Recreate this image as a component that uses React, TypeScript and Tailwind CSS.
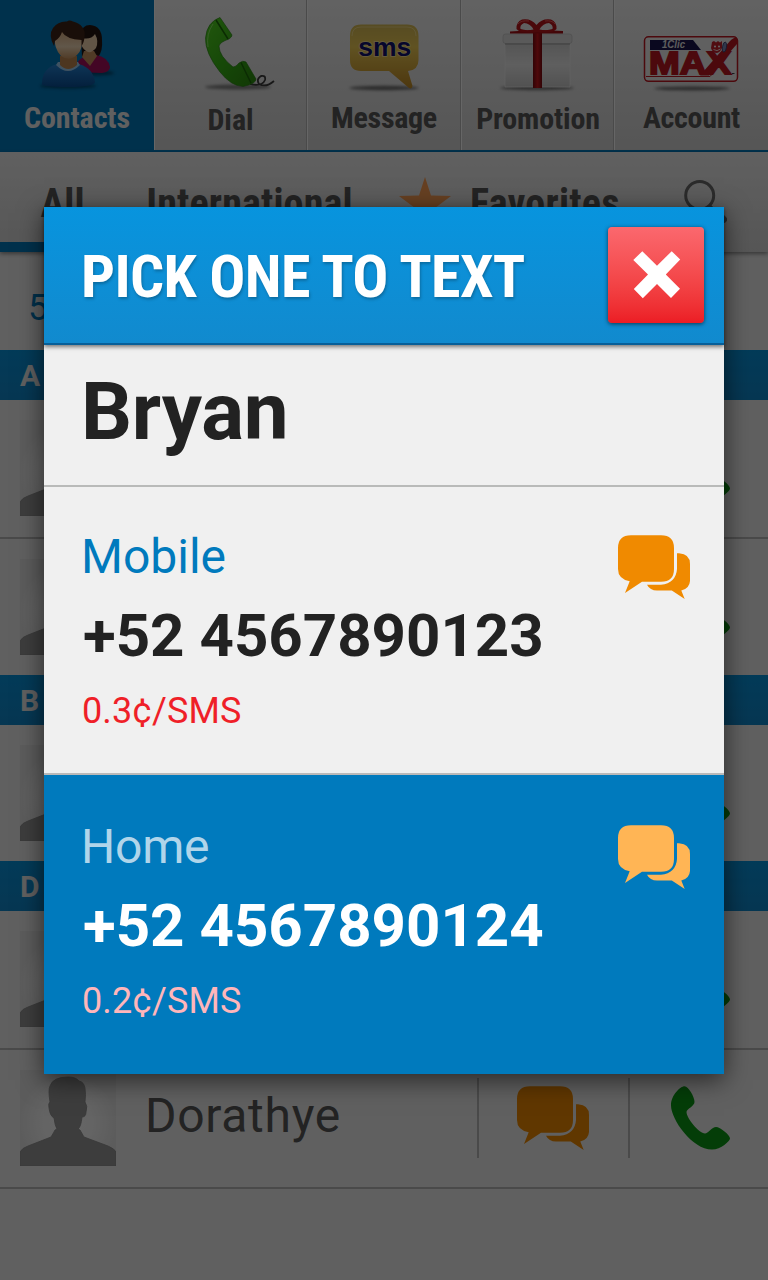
import React from "react";

function ChatIcon({ className }: { className?: string }) {
  return (
    <svg viewBox="0 0 72 64" className={"h-16 w-[72px] shrink-0 " + (className ?? "")} fill="currentColor">
      <path d="M13 .3H43Q56 .3 56 13V34Q56 46.800 43 46.800H24L7 58L11.700 46.300Q0 44 0 34V13Q0 .3 13 .3Z" />
      <path d="M59 18.300H61Q72 19 72 29V46Q71.500 53.500 63.300 55.600L66.700 64L53.800 55.600H39Q32 55.600 29 49.800H43Q58 48 59 34Z" />
    </svg>
  );
}

function PhoneIcon() {
  return (
    <svg viewBox="0 0 60 64" className="h-16 w-[60px] shrink-0 text-[#0a9a14]" fill="currentColor">
      <path d="M13.500 .3C9.500 .3 0 9 0 19.500C0 33 21 63.600 41 63.600C50 63.600 59 55 59 52.500C59 49 49 41 45 41C41 41 37 47.500 34 47.500C28 47.500 15.500 32 15.500 26C15.500 23 23.500 20 23.500 16C23.500 11 17.500 .3 13.500 .3Z" />
    </svg>
  );
}

function Avatar() {
  return (
    <svg viewBox="0 0 96 96" className="size-24 shrink-0">
      <defs>
        <radialGradient id="avatarBg" cx=".5" cy=".55" r=".5">
          <stop offset="0" stopColor="#ffffff" />
          <stop offset=".5" stopColor="#fafafa" />
          <stop offset="1" stopColor="#e7e7e7" />
        </radialGradient>
      </defs>
      <rect width="96" height="96" fill="url(#avatarBg)" />
      <path
        d="M0 96V82Q2 78 8 76L31 67Q34 62 35 60L37 59Q35 56 34 48Q30 46 29 38Q28 33 30 32Q28 20 30 16Q33 7 48 7Q56 7 59 11Q64 12 65 18Q66 24 65 32Q68 36 66 42Q66 47 62 47Q61 57 58 59L60 60Q64 67 64 67L88 76Q95 79 96 82V96Z"
        fill="#9a9a9a"
        stroke="#8c8c8c"
        strokeWidth=".8"
      />
    </svg>
  );
}

function ContactsArt() {
  return (
    <svg viewBox="0 0 154 100" className="h-[100px] w-full">
      <defs>
        <linearGradient id="face" x1="0" y1="0" x2="0" y2="1">
          <stop offset="0" stopColor="#d9a878" />
          <stop offset=".6" stopColor="#f2d9b8" />
          <stop offset="1" stopColor="#c99460" />
        </linearGradient>
        <linearGradient id="shirt" x1="0" y1="0" x2="0" y2="1">
          <stop offset="0" stopColor="#2585d6" />
          <stop offset="1" stopColor="#0a4f98" />
        </linearGradient>
        <filter id="soft" x="-20%" y="-200%" width="140%" height="500%">
          <feGaussianBlur stdDeviation="1.6" />
        </filter>
      </defs>
      <ellipse cx="98" cy="73" rx="16" ry="2.500" fill="#00283f" opacity=".6" filter="url(#soft)" />
      <ellipse cx="68" cy="86" rx="28" ry="2.500" fill="#00283f" opacity=".6" filter="url(#soft)" />
      <path d="M81 34Q82 25 90 25Q102 26 102 40Q103 51 98 57L82 57Z" fill="#241510" />
      <path d="M76 72Q75 60 84 57L96 55Q108 57 110 67Q110 72 102 73Z" fill="#a80f5c" />
      <path d="M82 57L90 66L97 56L94 51H84Z" fill="#c99460" />
      <path d="M82 38Q91 40 95 34Q99 41 96 48Q92 53 88 52Q83 50 81 44Z" fill="#f2d4b0" />
      <path d="M42 84Q42 68 57 64L79 64Q93 68 95 82Q94 87 68 87Q42 87 42 84Z" fill="url(#shirt)" />
      <path d="M56 65Q68 77 80 65L78 62H58Z" fill="#9fcdf2" />
      <path d="M60 56H77V65Q68 73 60 65Z" fill="#c08850" />
      <path d="M54 34Q68 22 82 36Q83 50 77 55Q69 62 61 56Q54 49 54 34Z" fill="url(#face)" />
      <path d="M54 46Q48 35 53 28Q58 21 67 21.500Q69 19.500 73 21.500Q86 25 84.500 37Q84 43 81.500 46V40Q66 39 62 32Q60 38 55 41Z" fill="#402417" />
    </svg>
  );
}

function DialArt() {
  return (
    <svg viewBox="155 0 151 100" className="h-[100px] w-full">
      <defs>
        <linearGradient id="handset" x1="0" y1="0" x2="1" y2="1">
          <stop offset="0" stopColor="#55d822" />
          <stop offset=".5" stopColor="#38b515" />
          <stop offset="1" stopColor="#2c8c0e" />
        </linearGradient>
      </defs>
      <ellipse cx="238" cy="87" rx="33" ry="2.500" fill="#555" opacity=".7" filter="url(#soft)" />
      <path d="M250 84Q262 87 265 80Q266 75 261 76Q256 79 259 84Q266 88 274 81" fill="none" stroke="#3d3d3d" strokeWidth="1.800" />
      <path d="M220 17.500L232 35Q232 37 229 39Q220 42 219 46Q219 56 233 67Q236 67 239 63Q243 60 246 62L256 79Q256 84 243 86.500Q231 86 220 72Q205 53 205.500 38Q207 22 220 17.500Z" fill="url(#handset)" stroke="#258010" strokeWidth=".6" />
      <path d="M216 20L228 39M241 62.500L251 83" stroke="#1c6c08" strokeWidth="1.500" fill="none" />
      <path d="M213 24Q206 34 208 47" stroke="#a5f080" strokeWidth="1" fill="none" opacity=".7" />
    </svg>
  );
}

function MessageArt() {
  return (
    <svg viewBox="308 0 152 100" className="h-[100px] w-full">
      <defs>
        <linearGradient id="bubble" x1="0" y1="0" x2="0" y2="1">
          <stop offset="0" stopColor="#d8bc55" />
          <stop offset=".35" stopColor="#f0cd55" />
          <stop offset="1" stopColor="#c08a25" />
        </linearGradient>
      </defs>
      <ellipse cx="384" cy="88" rx="35" ry="2.200" fill="#444" opacity=".75" filter="url(#soft)" />
      <path d="M361 24.500H407Q418.500 24.500 418.500 36V60Q418.500 70 408 71L412.500 86Q412 89.500 409 88L389 71H361Q350 71 350 60V36Q350 24.500 361 24.500Z" fill="url(#bubble)" />
      <path d="M352 36Q352 27 361 27H407Q416 27 416 36" fill="none" stroke="#fff2b0" strokeWidth="1" opacity=".5" />
      <text x="358.200" y="55.500" fontFamily="Liberation Sans, sans-serif" fontWeight="700" fontSize="26.500" fill="#10106e" stroke="#ffe9a0" strokeWidth="1.600" paintOrder="stroke">sms</text>
    </svg>
  );
}

function PromotionArt() {
  return (
    <svg viewBox="462 0 151 100" className="h-[100px] w-full">
      <defs>
        <linearGradient id="box" x1="0" y1="0" x2="0" y2="1">
          <stop offset="0" stopColor="#d2d2d2" />
          <stop offset=".5" stopColor="#ededed" />
          <stop offset="1" stopColor="#cccccc" />
        </linearGradient>
        <linearGradient id="ribbon" x1="0" y1="0" x2="1" y2="0">
          <stop offset="0" stopColor="#7d0b10" />
          <stop offset=".5" stopColor="#c4141b" />
          <stop offset="1" stopColor="#7d0b10" />
        </linearGradient>
      </defs>
      <ellipse cx="537" cy="88" rx="37" ry="2.200" fill="#555" opacity=".75" filter="url(#soft)" />
      <rect x="505" y="42" width="65" height="45" fill="url(#box)" />
      <path d="M505 87H570M505 44V87M570 44V87" stroke="#f6f6f6" strokeWidth=".6" />
      <rect x="503" y="34" width="69" height="9.500" rx="2.500" fill="#e0e0e0" stroke="#c4c4c4" strokeWidth=".7" />
      <path d="M505 44H570" stroke="#a0a0a0" strokeWidth="1" />
      <rect x="533" y="33" width="9" height="55" fill="url(#ribbon)" />
      <path d="M510 31.500L535 30H540L563 31V33.500H510Z" fill="#a81016" />
      <path
        fillRule="evenodd"
        d="M536.500 32Q520 34 516.500 29Q516 22 522 19.500Q531 18 536.500 25Q542 18 551 19.500Q557 22 556.500 29Q553 34 536.500 32ZM533.500 29.500Q530 23 524 23Q519.500 25 520.500 29Q526 31 533.500 29.500ZM539.500 29.500Q547 31 552.500 29Q553.500 25 549 23Q543 23 539.500 29.500Z"
        fill="#b8141b"
      />
      <path d="M518 24Q521 20 529 21M545 21Q552 20 555 24" fill="none" stroke="#ef5a58" strokeWidth="1" />
    </svg>
  );
}

function AccountArt() {
  return (
    <svg viewBox="615 0 153 100" className="h-[100px] w-full">
      <ellipse cx="692" cy="88.500" rx="38" ry="2" fill="#444" opacity=".75" filter="url(#soft)" />
      <rect x="644.500" y="36.800" width="93" height="44.500" rx="4" fill="#efefef" stroke="#bd1822" strokeWidth="1.500" />
      <path d="M650 40H693L701 50H650Z" fill="#19164f" />
      <text x="662" y="48.300" fontFamily="Liberation Sans, sans-serif" fontStyle="italic" fontWeight="700" fontSize="10" textLength="23" lengthAdjust="spacingAndGlyphs" fill="#e8e8e8">1Clic</text>
      <text x="649" y="74" fontFamily="Liberation Sans, sans-serif" fontWeight="700" fontSize="31" textLength="82" lengthAdjust="spacingAndGlyphs" fill="#bd1822" stroke="#bd1822" strokeWidth="1.800">MAX</text>
      <path d="M700 75.500L730 41Q735 36 737 38V44L709 75.500Z" fill="#bd1822" />
      <path d="M646 76.500H710L714 72" stroke="#bd1822" strokeWidth="1" fill="none" />
      <path d="M712 42L714 41L716 42.500L718 41L720 42.500L722 41V48Q720 53 716 53Q712 52 711 48Z" fill="#c8222c" />
      <circle cx="715" cy="46.500" r="1" fill="#fff" />
      <circle cx="719" cy="46.500" r="1" fill="#fff" />
      <path d="M713.500 49.500Q717 52 720.500 49" stroke="#fff" strokeWidth=".8" fill="none" />
      <ellipse cx="724.500" cy="47" rx="2" ry="5" fill="#7a8bb8" stroke="#303a70" strokeWidth=".8" transform="rotate(8 724 47)" />
      <path d="M732 73.500H734.500" stroke="#444" strokeWidth="1" />
    </svg>
  );
}

const navItems = [
  { label: "Contacts", art: <ContactsArt />, cell: "w-[154px] bg-[#007abd] text-[#f0f0f0]", text: "tracking-[-0.1px]" },
  { label: "Dial", art: <DialArt />, cell: "w-[153px]", text: "pt-0.5" },
  { label: "Message", art: <MessageArt />, cell: "w-[154px]", text: "tracking-[-0.3px]" },
  { label: "Promotion", art: <PromotionArt />, cell: "w-[153px]", text: "pt-px pl-px tracking-[-0.15px]" },
  { label: "Account", art: <AccountArt />, cell: "w-[154px]", text: "tracking-[-0.3px]" },
];

function TopNav() {
  return (
    <nav className="flex h-[152px] border-b-2 border-[#007abd] bg-linear-to-b from-[#f5f5f5] to-[#d6d6d6] text-[#575757]">
      {navItems.map((item, i) => (
        <div
          key={item.label}
          className={
            "flex h-[150px] flex-col items-center overflow-hidden " +
            item.cell +
            (i > 0 ? " border-l border-l-white" : "") +
            (i > 0 && i < 4 ? " border-r border-r-[#b8b8b8]" : "")
          }
        >
          {item.art}
          <span className={"text-[30px] leading-9 font-bold whitespace-nowrap [font-stretch:75%] " + item.text}>
            {item.label}
          </span>
        </div>
      ))}
    </nav>
  );
}

function FilterTabs() {
  return (
    <div className="relative flex h-[100px] bg-linear-to-b from-[#f0f0f0] to-[#d8d8d8] text-[40px] leading-[100px] font-bold text-[#575757] shadow-[0_2px_4px_rgba(0,0,0,0.4)] [font-stretch:75%]">
      <div className="flex h-[100px] w-[125px] justify-center border-b-[10px] border-[#007abd] pt-0.5">All</div>
      <div className="flex w-[249px] justify-center pt-0.5 tracking-[0.15px]">International</div>
      <div className="flex w-[270px] pl-[25px]">
        <svg viewBox="0 0 52 50" className="mt-[25px] h-[50px] w-[52px] shrink-0" fill="#ffa055">
          <path d="M26 0L32 18.500L52 19L36 31L42 50L26 38.500L10 50L16 31L0 19L20 18.500Z" />
        </svg>
        <span className="pt-0.5 pl-[19px] tracking-[0.25px]">Favorites</span>
      </div>
      <svg viewBox="0 0 44 44" className="mt-[27px] ml-[39px] size-11" fill="none" stroke="#6b6b6b">
        <circle cx="16.700" cy="16.500" r="14" strokeWidth="3" />
        <path d="M26.500 26.500L31 31" strokeWidth="3" />
        <path d="M32 32L40.500 40.500" strokeWidth="7" strokeLinecap="round" />
      </svg>
    </div>
  );
}

function SectionHeader({ letter }: { letter: string }) {
  return (
    <div className="h-[50px] bg-linear-to-b from-[#0794de] to-[#118ace] pt-px pl-5 text-[30px] leading-[50px] font-bold text-[#f0f0f0] [font-stretch:88%]">
      {letter}
    </div>
  );
}

function ContactRow({ name, last = false }: { name?: string; last?: boolean }) {
  return (
    <div className={"flex pt-5 pl-5 " + (last ? "h-[136px]" : "h-[139px] border-b-2 border-[#bababa]")}>
      <Avatar />
      <div className="w-[361px] pt-[18px] pl-[29px] text-[48px] leading-14 tracking-[0.7px] text-[#575757]">{name}</div>
      <div className="mt-2 flex h-20 w-[153px] border-x-2 border-[#bababa] pt-2 pl-[38px]">
        <ChatIcon className="text-[#f08a00]" />
      </div>
      <div className="mt-4 ml-[41px]">
        <PhoneIcon />
      </div>
    </div>
  );
}

function PhoneOption({ label, number, rate, active = false }: { label: string; number: string; rate: string; active?: boolean }) {
  return (
    <div className={"flex justify-between pl-[37px] " + (active ? "h-[299px] bg-[#007abd] pt-11" : "h-[288px] border-b-2 border-[#b9b9b9] pt-[42px]")}>
      <div className="whitespace-nowrap">
        <div className={"text-[48px] leading-14 " + (active ? "tracking-[-0.2px] text-[#b0d5ea]" : "text-[#007abd]")}>{label}</div>
        <div className={"mt-[15px] pl-0.5 text-[60px] leading-[72px] font-bold " + (active ? "text-white" : "text-[#222]")}>{number}</div>
        <div className={"mt-[17px] pl-px text-[36px] leading-11 tracking-[0.1px] " + (active ? "text-[#ffb6ba]" : "text-[#ef1f28]")}>{rate}</div>
      </div>
      <ChatIcon className={"mt-[6px] mr-[34px] " + (active ? "text-[#ffb555]" : "text-[#f08a00]")} />
    </div>
  );
}

function PickerDialog() {
  return (
    <section className="h-[867px] w-[680px] bg-[#f0f0f0] shadow-[0_6px_24px_rgba(0,0,0,0.6)]">
      <header className="relative flex h-[138px] justify-between border-b-2 border-[#075f99] bg-linear-to-b from-[#0794de] to-[#118ace] pl-[37px] shadow-[0_2px_4px_rgba(0,0,0,0.5)]">
        <h1 className="pt-[34px] text-[60px] leading-[72px] font-bold tracking-[-0.65px] whitespace-nowrap text-white [font-stretch:75%] [text-shadow:1px_2px_3px_rgba(0,0,0,0.25)]">
          PICK ONE TO TEXT
        </h1>
        <button className="mt-5 mr-5 flex size-24 items-center justify-center rounded bg-linear-to-b from-[#fb686e] to-[#ec1c24] shadow-[0_1px_4px_rgba(0,0,0,0.6)]">
          <svg viewBox="0 0 96 96" className="size-24" fill="#fff">
            <path d="M34.300 24.200L49 38.800L63.700 24.200L72.200 32.500L57.800 47.500L72 61.800L63 71L49 57L34.800 71.200L25.800 62L40 47.500L25.300 33Z" />
          </svg>
        </button>
      </header>
      <div className="h-[142px] border-b-2 border-[#b9bab9] pt-[19px] pl-[37px] text-[80px] leading-24 font-bold tracking-[-0.2px] text-[#222]">Bryan</div>
      <PhoneOption label="Mobile" number="+52 4567890123" rate="0.3¢/SMS" />
      <PhoneOption label="Home" number="+52 4567890124" rate="0.2¢/SMS" active />
    </section>
  );
}

export default function App() {
  return (
    <main className="relative h-[1280px] w-[768px] overflow-hidden bg-[#f0f0f0] font-[Roboto,sans-serif]">
      <TopNav />
      <FilterTabs />
      <div className="h-[98px] pt-[7px] pl-7 text-[36px] leading-[98px] text-[#007abd]">5</div>
      <SectionHeader letter="A" />
      <ContactRow />
      <ContactRow last />
      <SectionHeader letter="B" />
      <ContactRow last />
      <SectionHeader letter="D" />
      <ContactRow />
      <ContactRow name="Dorathye" />
      <div className="absolute inset-0 flex justify-center bg-black/60 pt-[207px]">
        <PickerDialog />
      </div>
    </main>
  );
}
